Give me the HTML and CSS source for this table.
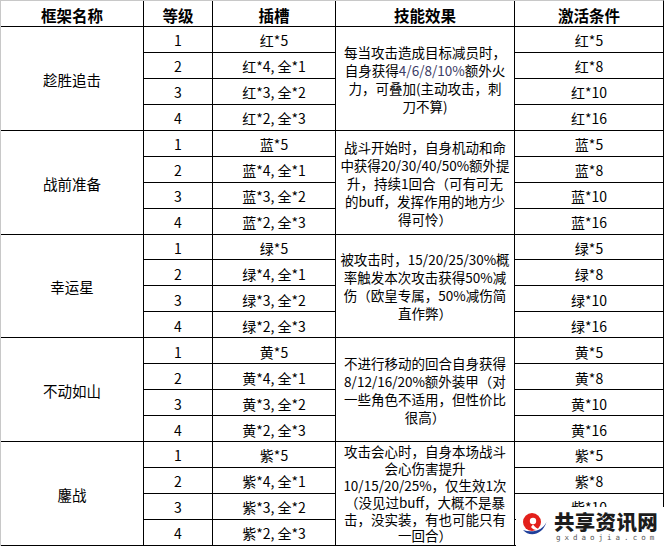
FILE: index.html
```html
<!DOCTYPE html>
<html lang="zh-CN">
<head>
<meta charset="utf-8">
<title>框架</title>
<link rel="stylesheet" href="styles.css">
</head>
<body>
<div class="page">
  <div class="sheet">
    <div class="hd">框架名称</div>
    <div class="hd">等级</div>
    <div class="hd">插槽</div>
    <div class="hd">技能效果</div>
    <div class="hd">激活条件</div>

    <div class="name">趁胜追击</div>
    <div class="c">1</div><div class="c">红*5</div>
    <div class="eff"><p class="txt">每当攻击造成目标减员时，<br>自身获得<span class="num">4/6/8/10%</span>额外火<br>力，可叠加(主动攻击，刺<br>刀不算)</p></div>
    <div class="c">红*5</div>
    <div class="c">2</div><div class="c">红*4, 全*1</div><div class="c">红*8</div>
    <div class="c">3</div><div class="c">红*3, 全*2</div><div class="c">红*10</div>
    <div class="c">4</div><div class="c">红*2, 全*3</div><div class="c">红*16</div>

    <div class="name">战前准备</div>
    <div class="c">1</div><div class="c">蓝*5</div>
    <div class="eff"><p class="txt">战斗开始时，自身机动和命<br>中获得20/30/40/50%额外提<br>升，持续1回合（可有可无<br>的buff，发挥作用的地方少<br>得可怜）</p></div>
    <div class="c">蓝*5</div>
    <div class="c">2</div><div class="c">蓝*4, 全*1</div><div class="c">蓝*8</div>
    <div class="c">3</div><div class="c">蓝*3, 全*2</div><div class="c">蓝*10</div>
    <div class="c">4</div><div class="c">蓝*2, 全*3</div><div class="c">蓝*16</div>

    <div class="name">幸运星</div>
    <div class="c">1</div><div class="c">绿*5</div>
    <div class="eff"><p class="txt">被攻击时，15/20/25/30%概<br>率触发本次攻击获得50%减<br>伤（欧皇专属，50%减伤简<br>直作弊）</p></div>
    <div class="c">绿*5</div>
    <div class="c">2</div><div class="c">绿*4, 全*1</div><div class="c">绿*8</div>
    <div class="c">3</div><div class="c">绿*3, 全*2</div><div class="c">绿*10</div>
    <div class="c">4</div><div class="c">绿*2, 全*3</div><div class="c">绿*16</div>

    <div class="name">不动如山</div>
    <div class="c">1</div><div class="c">黄*5</div>
    <div class="eff"><p class="txt">不进行移动的回合自身获得<br>8/12/16/20%额外装甲（对<br>一些角色不适用，但性价比<br>很高）</p></div>
    <div class="c">黄*5</div>
    <div class="c">2</div><div class="c">黄*4, 全*1</div><div class="c">黄*8</div>
    <div class="c">3</div><div class="c">黄*3, 全*2</div><div class="c">黄*10</div>
    <div class="c">4</div><div class="c">黄*2, 全*3</div><div class="c">黄*16</div>

    <div class="name">鏖战</div>
    <div class="c">1</div><div class="c">紫*5</div>
    <div class="eff tight"><p class="txt">攻击会心时，自身本场战斗<br>会心伤害提升<br>10/15/20/25%，仅生效1次<br>（没见过buff，大概不是暴<br>击，没实装，有也可能只有<br>一回合）</p></div>
    <div class="c">紫*5</div>
    <div class="c">2</div><div class="c">紫*4, 全*1</div><div class="c">紫*8</div>
    <div class="c">3</div><div class="c">紫*3, 全*2</div><div class="c">紫*10</div>
    <div class="c">4</div><div class="c">紫*2, 全*3</div><div class="c">紫*16</div>
  </div>

  <div class="mark">
    <svg class="logo" viewBox="0 0 28 24" width="28" height="24" aria-hidden="true">
      <circle cx="12" cy="10" r="9" fill="#e3201b"/>
      <circle cx="13" cy="9" r="3.2" fill="#fff"/>
      <path d="M13 12.5 C15 15 17 17 20 17 C17 19 13 18 11 15 Z" fill="#fff"/>
      <path d="M3 18 C9 25 22 24 26.5 10 C23 18 13 21.5 3 18 Z" fill="#1f3f9a"/>
    </svg>
    <div class="brand">
      <div class="brand-cn">共享资讯网</div>
      <div class="brand-en">gxdaojia.com</div>
    </div>
  </div>
</div>
</body>
</html>
```

FILE: styles.css
```css
html, body {
  margin: 0;
  padding: 0;
  background: #fff;
  overflow: hidden;
}

.page {
  position: relative;
  width: 664px;
  height: 546px;
  overflow: hidden;
  font-family: "Noto Sans CJK SC", "Liberation Sans", sans-serif;
  color: #000;
}

.sheet {
  box-sizing: border-box;
  width: 664px;
  height: 547px;
  display: grid;
  grid-template-columns: 142px 68px 122px 178px 148px;
  grid-template-rows: 25px repeat(20, 24.95px);
  gap: 1px;
  background: #000;
  border-top: 1px solid #c8c8c8;
  border-left: 1px solid #c8c8c8;
  border-right: 1px solid #000;
  border-bottom: 1px solid #000;
}

.sheet > div {
  background: #fff;
  display: flex;
  align-items: center;
  justify-content: center;
  text-align: center;
  white-space: nowrap;
}

.hd {
  font-size: 15.5px;
  font-weight: 700;
  padding-top: 2px;
}

.c {
  font-size: 14px;
  padding-top: 2px;
}

.name {
  grid-row: span 4;
  font-size: 14.5px;
  padding-top: 2px;
}

.eff {
  grid-row: span 4;
  font-size: 13.5px;
  line-height: 18px;
  padding-top: 1px;
}

.eff.tight {
  line-height: 16.8px;
}

.txt {
  margin: 0;
}

.num {
  color: #3c3c66;
}

.mark {
  position: absolute;
  left: 516px;
  top: 507px;
  width: 148px;
  height: 39px;
  background: #fff;
  display: flex;
  align-items: flex-start;
  gap: 6px;
  padding: 3px 0 0 4px;
  box-sizing: border-box;
}

.logo {
  margin-top: 2px;
  flex: none;
}

.brand {
  display: flex;
  flex-direction: column;
  align-items: flex-start;
}

.brand-cn {
  font-size: 20.5px;
  font-weight: 900;
  line-height: 23px;
  color: #1c1c1c;
  letter-spacing: 0.3px;
}

.brand-en {
  font-family: "DejaVu Sans Mono", monospace;
  font-size: 7.5px;
  line-height: 9px;
  color: #555;
  letter-spacing: 4px;
  padding-left: 2px;
}
```
